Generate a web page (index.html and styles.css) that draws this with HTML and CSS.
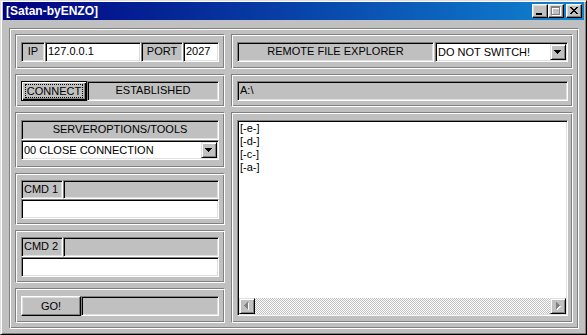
FILE: index.html
```html
<!DOCTYPE html>
<html lang="en">
<head>
    <meta charset="UTF-8">
    <title>[Satan-byENZO]</title>
    <link rel="stylesheet" href="styles.css">
</head>
<body>
    <div class="window">
        <div class="titlebar">
            <span class="title">[Satan-byENZO]</span>
            <div class="title-buttons">
                <div class="tbtn">
                    <svg width="14" height="12" shape-rendering="crispEdges"><path d="M3 8h6v2h-6z" fill="#000"/></svg>
                </div>
                <div class="tbtn">
                    <svg width="14" height="12" shape-rendering="crispEdges">
                        <path d="M3 2h9v9h-9z M4 4h7v6h-7z" fill="#fff" fill-rule="evenodd"/>
                        <path d="M2 1h9v9h-9z M3 3h7v6h-7z" fill="#808080" fill-rule="evenodd"/>
                    </svg>
                </div>
                <div class="tbtn close">
                    <svg width="14" height="12" shape-rendering="crispEdges"><path d="M3 2h2v1h-2z M9 2h2v1h-2z M4 3h2v1h-2z M8 3h2v1h-2z M5 4h4v1h-4z M6 5h2v1h-2z M5 6h4v1h-4z M4 7h2v1h-2z M8 7h2v1h-2z M3 8h2v1h-2z M9 8h2v1h-2z" fill="#000"/></svg>
                </div>
            </div>
        </div>

        <div class="client">
            <div class="frame">
                <!-- colonne gauche : connexion / commandes -->
                <div class="col left">
                    <div class="panel p-ip">
                        <div class="row">
                            <div class="sunk center w-ip">IP</div>
                            <div class="sunk field w-host">127.0.0.1</div>
                            <div class="sunk center w-port">PORT</div>
                            <div class="sunk field w-portval">2027</div>
                        </div>
                    </div>

                    <div class="panel p-conn">
                        <div class="row">
                            <button class="btn default w-connect"><span class="focus">CONNECT</span></button>
                            <div class="sunk center grow">ESTABLISHED</div>
                        </div>
                    </div>

                    <div class="panel p-srv">
                        <div class="row">
                            <div class="sunk center grow">SERVEROPTIONS/TOOLS</div>
                        </div>
                        <div class="row">
                            <div class="combo grow">
                                <span class="combo-text">00 CLOSE CONNECTION</span>
                                <div class="drop">
                                    <svg width="14" height="14" shape-rendering="crispEdges"><path d="M3 5h7v1h-7z M4 6h5v1h-5z M5 7h3v1h-3z M6 8h1v1h-1z" fill="#000"/></svg>
                                </div>
                            </div>
                        </div>
                    </div>

                    <div class="panel p-cmd1">
                        <div class="row short">
                            <div class="sunk w-cmd">CMD 1</div>
                            <div class="sunk grow"></div>
                        </div>
                        <div class="row">
                            <div class="sunk field grow"></div>
                        </div>
                    </div>

                    <div class="panel p-cmd2">
                        <div class="row">
                            <div class="sunk w-cmd">CMD 2</div>
                            <div class="sunk grow"></div>
                        </div>
                        <div class="row">
                            <div class="sunk field grow"></div>
                        </div>
                    </div>

                    <div class="panel p-go">
                        <div class="row">
                            <button class="btn w-go">GO!</button>
                            <div class="sunk grow"></div>
                        </div>
                    </div>
                </div>

                <!-- colonne droite : explorateur -->
                <div class="col right">
                    <div class="panel p-top">
                        <div class="row">
                            <div class="sunk center w-remote">REMOTE FILE EXPLORER</div>
                            <div class="combo grow switch">
                                <span class="combo-text">DO NOT SWITCH!</span>
                                <div class="drop">
                                    <svg width="14" height="14" shape-rendering="crispEdges"><path d="M3 5h7v1h-7z M4 6h5v1h-5z M5 7h3v1h-3z M6 8h1v1h-1z" fill="#000"/></svg>
                                </div>
                            </div>
                        </div>
                    </div>

                    <div class="panel p-path">
                        <div class="row">
                            <div class="sunk grow">A:\</div>
                        </div>
                    </div>

                    <div class="panel p-explorer">
                        <div class="list">
                            <div class="items">
                                <div>[-e-]</div>
                                <div>[-d-]</div>
                                <div>[-c-]</div>
                                <div>[-a-]</div>
                            </div>
                            <div class="hscroll">
                                <div class="sarrow">
                                    <svg width="14" height="14" shape-rendering="crispEdges">
                                        <path d="M8 4h1v7h-1z M7 5h1v5h-1z M6 6h1v3h-1z M5 7h1v1h-1z" fill="#fff"/>
                                        <path d="M7 3h1v7h-1z M6 4h1v5h-1z M5 5h1v3h-1z M4 6h1v1h-1z" fill="#808080"/>
                                    </svg>
                                </div>
                                <div class="track"></div>
                                <div class="sarrow">
                                    <svg width="14" height="14" shape-rendering="crispEdges">
                                        <path d="M6 4h1v7h-1z M7 5h1v5h-1z M8 6h1v3h-1z M9 7h1v1h-1z" fill="#fff"/>
                                        <path d="M5 3h1v7h-1z M6 4h1v5h-1z M7 5h1v3h-1z M8 6h1v1h-1z" fill="#808080"/>
                                    </svg>
                                </div>
                            </div>
                        </div>
                    </div>
                </div>
            </div>
        </div>
    </div>
</body>
</html>
```

FILE: styles.css
```css
* {
    margin: 0;
    padding: 0;
    box-sizing: border-box;
}

body {
    font-family: "Liberation Sans", Arial, sans-serif;
    font-size: 11px;
    color: #000;
    background-color: #c0c0c0;
    width: 587px;
    height: 335px;
    overflow: hidden;
}

button {
    font: inherit;
    color: inherit;
    background-color: #c0c0c0;
    cursor: pointer;
}

.window {
    width: 587px;
    height: 335px;
    display: flex;
    flex-direction: column;
    background-color: #c0c0c0;
    border: 1px solid;
    border-color: #dfdfdf #000 #000 #dfdfdf;
    box-shadow: inset 1px 1px #fff, inset -1px -1px #808080;
    padding: 1px 2px 2px 2px;
}

/* barre de titre */
.titlebar {
    height: 18px;
    display: flex;
    align-items: center;
    justify-content: space-between;
    padding: 0 2px 0 3px;
    background: linear-gradient(to right, #000080, #1084d0);
}

.title {
    color: #fff;
    font-weight: bold;
    font-size: 12px;
}

.title-buttons {
    display: flex;
}

.tbtn {
    width: 16px;
    height: 14px;
    background-color: #c0c0c0;
    border: 1px solid;
    border-color: #fff #000 #000 #fff;
    box-shadow: inset -1px -1px #808080, inset 1px 1px #dfdfdf;
}

.tbtn svg {
    display: block;
}

.tbtn.close {
    margin-left: 2px;
}

/* zone client */
.client {
    flex: 1;
    display: flex;
    padding: 8px 5px 3px 6px;
}

.frame,
.panel {
    border: 1px solid;
    border-color: #808080 #fff #fff #808080;
    box-shadow: inset 1px 1px #fff, inset -1px -1px #808080;
}

.frame {
    flex: 1;
    display: flex;
    gap: 6px;
    padding: 5px;
}

.col {
    display: flex;
    flex-direction: column;
    gap: 5px;
}

.col.left {
    width: 210px;
}

.col.right {
    flex: 1;
}

.panel {
    display: flex;
    flex-direction: column;
    justify-content: center;
    padding: 0 5px;
}

.right .panel {
    padding: 0 4px 0 5px;
}

.p-ip { height: 35px; }
.p-conn { height: 33px; }
.p-srv { height: 56px; }
.p-cmd1 { height: 52px; }
.p-cmd2 { height: 53px; }
.p-go { height: 35px; }
.p-top { height: 35px; }
.p-path { height: 33px; }

.right .p-explorer {
    flex: 1;
    justify-content: flex-start;
    padding: 7px 4px 6px 5px;
}

.row {
    display: flex;
    height: 20px;
}

.row.short {
    height: 19px;
}

.grow {
    flex: 1;
}

/* cases enfoncées */
.sunk {
    height: 100%;
    background-color: #c0c0c0;
    border: 1px solid;
    border-color: #808080 #fff #fff #808080;
    box-shadow: inset 1px 1px #000, inset -1px -1px #dfdfdf;
    padding: 0 1px 0 2px;
    line-height: 16px;
    white-space: nowrap;
    overflow: hidden;
}

.sunk.field {
    background-color: #fff;
}

.sunk.center {
    text-align: center;
    padding: 0 1px;
}

.w-ip { width: 24px; }
.w-host { width: 96px; }
.w-port { width: 42px; }
.w-portval { width: 36px; }
.w-cmd { width: 42px; }
.w-remote { width: 197px; }

/* boutons */
.btn {
    height: 20px;
    border: 1px solid;
    border-color: #fff #000 #000 #fff;
    box-shadow: inset -1px -1px #808080, inset 1px 1px #dfdfdf;
}

.btn.default {
    border-color: #000;
    box-shadow: inset 1px 1px #fff, inset -1px -1px #000, inset -2px -2px #808080;
}

.w-connect { width: 66px; }
.w-go { width: 60px; }

.focus {
    display: inline-block;
    border: 1px dotted #000;
    padding: 0 1px;
    line-height: 12px;
}

/* listes déroulantes */
.combo {
    height: 20px;
    display: flex;
    background-color: #fff;
    border: 1px solid;
    border-color: #808080 #fff #fff #808080;
    box-shadow: inset 1px 1px #000, inset -1px -1px #dfdfdf;
    padding: 1px;
}

.switch {
    margin-left: 1px;
}

.combo-text {
    flex: 1;
    line-height: 16px;
    padding-left: 1px;
    white-space: nowrap;
    overflow: hidden;
}

.drop,
.sarrow {
    width: 16px;
    height: 16px;
    background-color: #c0c0c0;
    border: 1px solid;
    border-color: #dfdfdf #000 #000 #dfdfdf;
    box-shadow: inset 1px 1px #fff, inset -1px -1px #808080;
}

.drop svg,
.sarrow svg {
    display: block;
}

/* explorateur */
.list {
    flex: 1;
    display: flex;
    flex-direction: column;
    background-color: #fff;
    border: 1px solid;
    border-color: #808080 #fff #fff #808080;
    box-shadow: inset 1px 1px #000, inset -1px -1px #dfdfdf;
    padding: 1px;
}

.items {
    flex: 1;
    padding-left: 1px;
    line-height: 13px;
}

.hscroll {
    height: 16px;
    display: flex;
}

.track {
    flex: 1;
    background: repeating-conic-gradient(#c0c0c0 0% 25%, #fff 0% 50%) 0 0 / 2px 2px;
}
```
